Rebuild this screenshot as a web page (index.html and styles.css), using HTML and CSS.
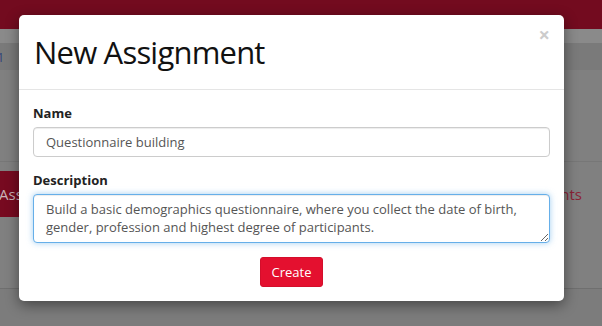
FILE: index.html
```html
<!DOCTYPE html>
<html lang="en">
<head>
    <meta charset="UTF-8">
    <meta name="viewport" content="width=device-width, initial-scale=1.0">
    <title>New Assignment</title>
    <link rel="stylesheet" href="styles.css">
</head>
<body>
    <header class="topbar"></header>
    <div class="subbar"></div>
    <nav class="tabs"><span class="tab-num">1</span></nav>

    <main class="content">
        <div class="toolbar">
            <button class="btn-dark">Assignments</button>
            <a class="link-red" href="#">Assignments</a>
        </div>
    </main>
    <div class="footer-area"></div>

    <div class="modal">
        <div class="modal-header">
            <button class="close" type="button">&times;</button>
            <h2 class="modal-title">New Assignment</h2>
        </div>
        <form class="modal-body" id="assignment-form">
            <div class="form-group">
                <label for="name">Name</label>
                <input type="text" id="name" class="form-control" value="Questionnaire building">
            </div>
            <div class="form-group">
                <label for="description">Description</label>
                <textarea id="description" class="form-control focused" rows="2">Build a basic demographics questionnaire, where you collect the date of birth, gender, profession and highest degree of participants.</textarea>
            </div>
            <div class="actions">
                <button type="submit" class="btn-create">Create</button>
            </div>
        </form>
    </div>

    <script>
        // 光标放到描述末尾
        const desc = document.getElementById('description');
        desc.focus();
        desc.setSelectionRange(desc.value.length, desc.value.length);
        document.getElementById('assignment-form').addEventListener('submit', (e) => e.preventDefault());
    </script>
</body>
</html>
```

FILE: styles.css
```css
* {
    margin: 0;
    padding: 0;
    box-sizing: border-box;
}

body {
    font-family: 'Open Sans', 'Liberation Sans', sans-serif;
    background: #808080;
    width: 602px;
    height: 326px;
    overflow: hidden;
    position: relative;
}

.topbar {
    height: 29px;
    background: #730b1f;
}

.subbar {
    height: 14px;
    background: #8a8a8a;
}

.tabs {
    height: 27px;
    background: #7a7a7a;
    display: flex;
    align-items: center;
}

.tab-num {
    font-size: 13px;
    color: #33457a;
    margin-left: -3px;
}

.content {
    height: 219px;
    padding-top: 91px;
    border-bottom: 1px solid #6f6f6f;
}

.toolbar {
    display: flex;
    justify-content: space-between;
    align-items: center;
    border-top: 1px solid #777;
    padding-top: 9px;
}

.btn-dark {
    font-family: inherit;
    font-size: 15px;
    height: 46px;
    padding: 0 12px;
    margin-left: -13px;
    background: #770a20;
    color: #c9b3b8;
    border: none;
}

.link-red {
    font-size: 15px;
    color: #8c2336;
    text-decoration: none;
    margin-right: 20px;
}

.footer-area {
    height: 37px;
    background: #7c7c7c;
}

.modal {
    position: absolute;
    left: 19px;
    top: 15px;
    width: 545px;
    background: #fff;
    border-radius: 5px;
    box-shadow: 0 4px 14px rgba(0, 0, 0, 0.45);
}

.modal-header {
    position: relative;
    padding: 15px;
    border-bottom: 1px solid #e5e5e5;
}

.modal-title {
    font-size: 31px;
    font-weight: 400;
    line-height: 44px;
    color: #111;
    letter-spacing: -0.8px;
}

.close {
    position: absolute;
    top: 10px;
    right: 14px;
    font-family: inherit;
    font-size: 20px;
    font-weight: 700;
    line-height: 1;
    color: #ccc;
    background: none;
    border: none;
    cursor: pointer;
}

.modal-body {
    padding: 13px 14px 14px;
}

.form-group {
    margin-bottom: 13px;
}

label {
    display: block;
    font-size: 13px;
    font-weight: 700;
    line-height: 20px;
    color: #222;
    margin-bottom: 4px;
}

.form-control {
    display: block;
    width: 100%;
    font-family: inherit;
    font-size: 13px;
    color: #555;
    border: 1px solid #ccc;
    border-radius: 4px;
    background: #fff;
    box-shadow: inset 0 1px 1px rgba(0, 0, 0, 0.075);
    outline: none;
}

input.form-control {
    height: 30px;
    padding: 4px 12px;
}

textarea.form-control {
    height: 49px;
    padding: 5px 12px;
    line-height: 18px;
    resize: vertical;
}

.form-control.focused {
    border-color: #66afe9;
    box-shadow: inset 0 1px 1px rgba(0, 0, 0, 0.075), 0 0 6px rgba(102, 175, 233, 0.6);
}

.actions {
    display: flex;
    justify-content: center;
    padding-top: 1px;
}

.btn-create {
    font-family: inherit;
    font-size: 13px;
    height: 30px;
    padding: 0 11px;
    background: #e4102f;
    color: #fff;
    border: 1px solid #d40e2b;
    border-radius: 3px;
    cursor: pointer;
}
```
